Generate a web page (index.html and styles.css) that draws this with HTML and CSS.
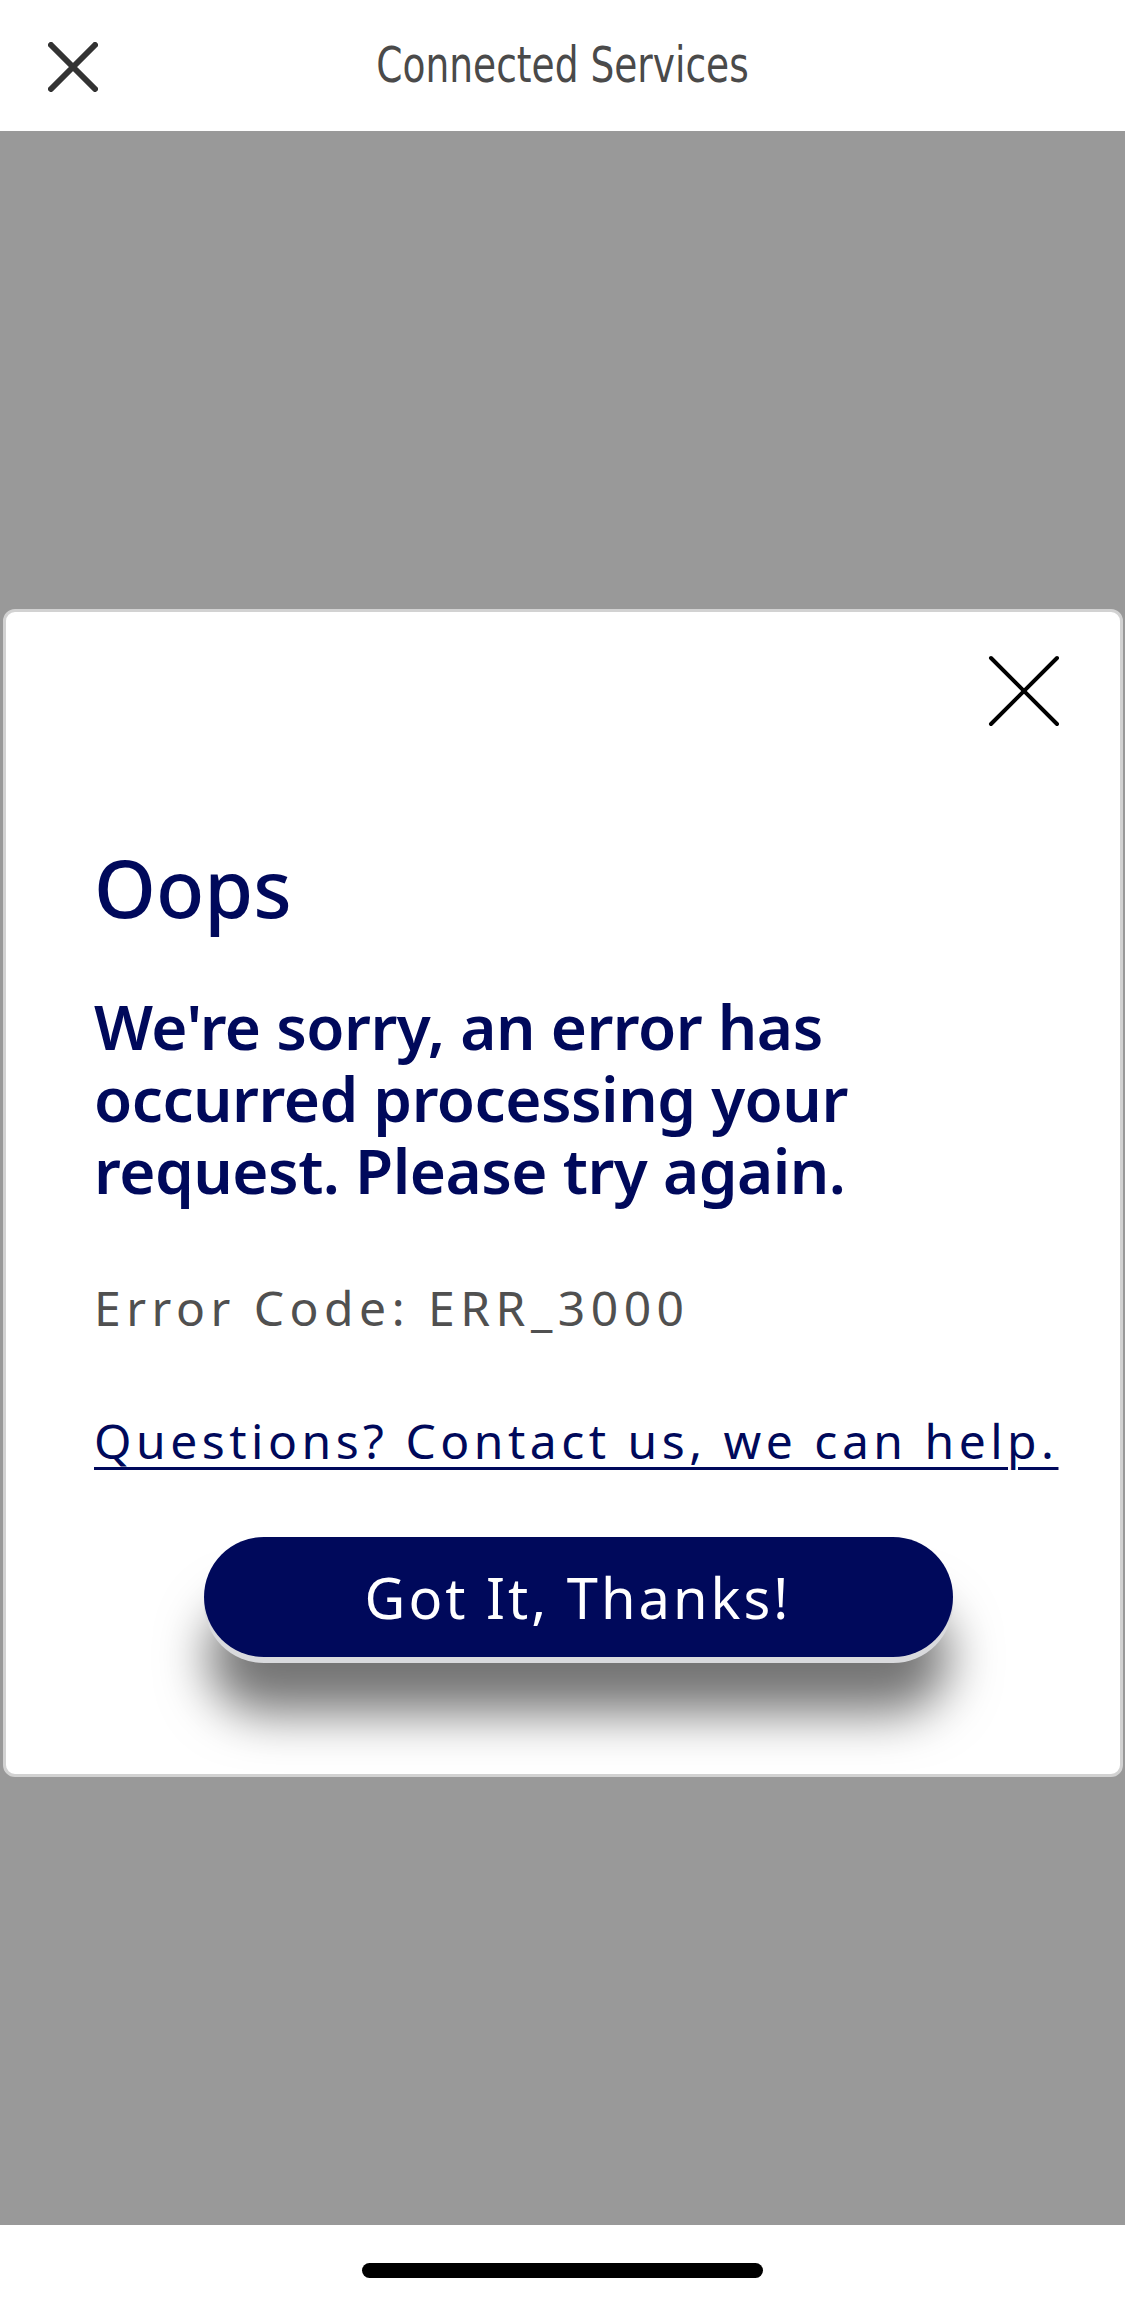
FILE: index.html
```html
<!DOCTYPE html>
<html lang="en">

<head>
    <meta charset="UTF-8">
    <meta name="viewport" content="width=device-width, initial-scale=1.0">
    <title>Connected Services</title>
    <link rel="stylesheet" href="styles.css">
</head>

<body>
    <header class="top-bar">
        <button class="top-close" aria-label="Close">
            <svg width="50" height="50" viewBox="0 0 50 50">
                <path d="M3 3 L47 47 M47 3 L3 47" stroke="#333333" stroke-width="6" stroke-linecap="round" />
            </svg>
        </button>
        <h1 class="top-title">Connected Services</h1>
    </header>

    <main class="overlay">
        <div class="modal">
            <div class="modal-head">
                <button class="modal-close" aria-label="Close">
                    <svg width="72" height="72" viewBox="0 0 72 72">
                        <path d="M3 3 L69 69 M69 3 L3 69" stroke="#000000" stroke-width="4" stroke-linecap="round" />
                    </svg>
                </button>
            </div>
            <h2 class="modal-title">Oops</h2>
            <p class="modal-message">We're sorry, an error has<br>occurred processing your<br>request. Please try again.</p>
            <p class="error-code">Error Code: ERR_3000</p>
            <a class="help-link" href="#">Questions? Contact us, we can help.</a>
            <div class="modal-actions">
                <button class="primary-btn">Got It, Thanks!</button>
            </div>
        </div>
    </main>

    <footer class="home-area">
        <div class="home-indicator"></div>
    </footer>
</body>

</html>
```

FILE: styles.css
```css
body {
    margin: 0;
    padding: 0;
    width: 1125px;
    height: 2304px;
    display: flex;
    flex-direction: column;
    font-family: "Noto Sans", sans-serif;
    background-color: #ffffff;
}

button {
    background: none;
    border: none;
    padding: 0;
    cursor: pointer;
}

.top-bar {
    height: 131px;
    display: flex;
    align-items: center;
    background-color: #ffffff;
    position: relative;
}

.top-close {
    display: flex;
    margin-left: 48px;
    margin-top: 2px;
}

.top-title {
    position: absolute;
    left: 0;
    right: 0;
    top: 35px;
    margin: 0;
    text-align: center;
    font-family: "DejaVu Sans Condensed", "DejaVu Sans", sans-serif;
    font-weight: normal;
    font-size: 50px;
    line-height: 60px;
    color: #4a4a4a;
    transform: scaleX(0.835);
    pointer-events: none;
}

.overlay {
    flex: 1;
    background-color: #999999;
    padding-top: 478px;
}

.modal {
    margin: 0 2px 0 3px;
    background-color: #ffffff;
    border: 3px solid #d2d2d2;
    border-radius: 12px;
    padding: 0 60px 0 88px;
    height: 1168px;
    box-sizing: border-box;
}

.modal-head {
    display: flex;
    justify-content: flex-end;
    padding-top: 43px;
}

.modal-close {
    display: flex;
}

.modal-title {
    margin: 116px 0 0 0;
    font-size: 79px;
    line-height: 90px;
    font-weight: 500;
    color: #00095b;
}

.modal-message {
    margin: 57px 0 0 0;
    font-size: 62px;
    line-height: 72px;
    font-weight: 600;
    color: #00095b;
    letter-spacing: -0.5px;
}

.error-code {
    margin: 72px 0 0 0;
    font-size: 48px;
    line-height: 60px;
    color: #505050;
    letter-spacing: 5.5px;
}

.help-link {
    display: block;
    margin-top: 73px;
    margin-right: -40px;
    white-space: nowrap;
    font-size: 48px;
    line-height: 60px;
    color: #00095b;
    letter-spacing: 4.5px;
    text-decoration: underline;
    text-decoration-thickness: 3px;
    text-underline-offset: 8px;
}

.modal-actions {
    display: flex;
    justify-content: center;
    margin-top: 66px;
    margin-left: 2px;
}

.primary-btn {
    width: 749px;
    height: 120px;
    border-radius: 60px;
    background-color: #00095b;
    color: #ffffff;
    font-family: "Noto Sans", sans-serif;
    font-size: 56px;
    letter-spacing: 3px;
    box-shadow: 0 6px 0 #d9dadd, 0 60px 50px -4px rgba(0, 0, 0, 0.55);
}

.home-area {
    height: 79px;
    display: flex;
    justify-content: center;
    background-color: #ffffff;
}

.home-indicator {
    margin-top: 38px;
    width: 401px;
    height: 15px;
    border-radius: 8px;
    background-color: #000000;
}
```
